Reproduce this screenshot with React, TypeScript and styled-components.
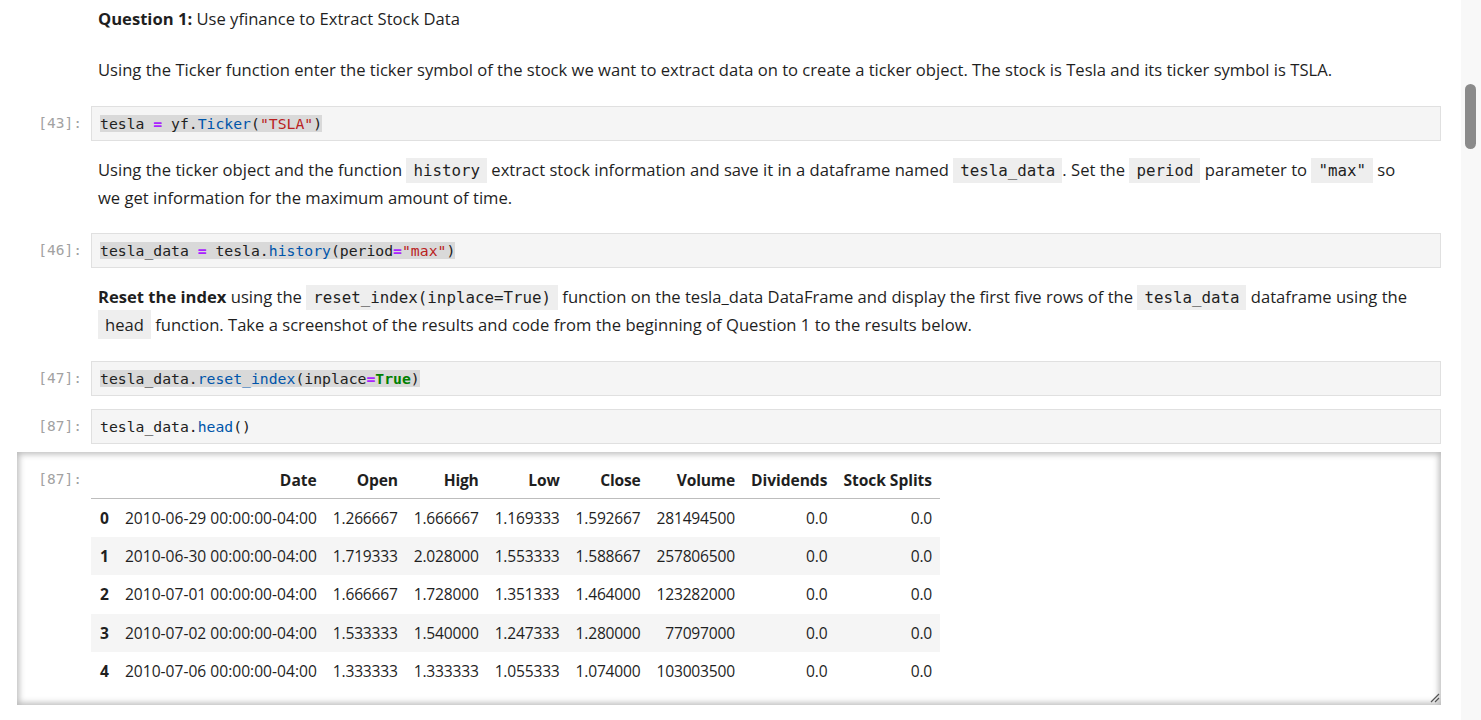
import React from 'react';
import styled, { createGlobalStyle } from 'styled-components';

const Global = createGlobalStyle`
  html, body { margin: 0; padding: 0; background: #fff; }
  body { font-family: "Open Sans", "Noto Sans", sans-serif; color: #1f1f1f; }
  * { box-sizing: border-box; }
`;

const Page = styled.div`
  display: flex;
  height: 720px;
  overflow: hidden;
  background: #fff;
`;

const Notebook = styled.main`
  flex: 1;
  min-width: 0;
  display: flex;
  flex-direction: column;
  padding: 5px 20px 0 0;
`;

const ScrollTrack = styled.div`
  width: 20px;
  flex: none;
  background: #f8f8f8;
  padding: 84px 0 0 4px;
`;

const ScrollThumb = styled.div`
  width: 11px;
  height: 65px;
  border-radius: 6px;
  background: #8b8b8b;
`;

const Cell = styled.section<{ $pt?: number; $pb?: number }>`
  display: grid;
  grid-template-columns: 91px 1fr;
  padding-top: ${(p) => p.$pt ?? 0}px;
  padding-bottom: ${(p) => p.$pb ?? 0}px;
`;

const Prompt = styled.div<{ $lh?: number }>`
  font-family: "DejaVu Sans Mono", monospace;
  font-size: 14.5px;
  line-height: ${(p) => p.$lh ?? 35}px;
  color: #a2a2a2;
  text-align: right;
  padding-right: 9px;
  white-space: pre;
`;

const Markdown = styled.div`
  padding: 0 26px 0 7px;
  font-size: 16.6px;
  line-height: 28px;
  color: #1f1f1f;
  p { margin: 0; }
  b { font-weight: 700; }
`;

const InlineCode = styled.code<{ $sans?: boolean }>`
  font-family: ${(p) => (p.$sans ? '"Open Sans", sans-serif' : '"DejaVu Sans Mono", monospace')};
  font-size: ${(p) => (p.$sans ? '16.6px' : '15.8px')};
  line-height: 1;
  background: #eeeeee;
  padding: 3px 7px;
  color: #1f1f1f;
`;

const Editor = styled.div`
  background: #f5f5f5;
  border: 1px solid #e0e0e0;
  padding: 8px;
  font-family: "DejaVu Sans Mono", monospace;
  font-size: 14.75px;
  line-height: 17px;
  color: #212121;
  white-space: pre;
`;

const Highlight = styled.span`
  background: #d9d9d9;
`;

const Tok = styled.span<{ $k: 'op' | 'fn' | 'str' | 'kw' }>`
  color: ${(p) =>
    p.$k === 'op' ? '#aa22ff' : p.$k === 'fn' ? '#0055aa' : p.$k === 'str' ? '#ba2121' : '#008000'};
  font-weight: ${(p) => (p.$k === 'op' || p.$k === 'kw' ? 700 : 400)};
`;

const OutputArea = styled.div`
  position: relative;
  margin: 8px 0 0 17px;
  height: 253px;
  padding-top: 9px;
  display: grid;
  grid-template-columns: 74px 1fr;
  align-items: start;
  box-shadow: inset 0 0 6px 2px rgba(0, 0, 0, 0.28);
`;

const ResizeHandle = styled.svg`
  position: absolute;
  right: 1px;
  bottom: 2px;
`;

const Table = styled.table`
  justify-self: start;
  border-collapse: collapse;
  font-size: 15.6px;
  color: #1f1f1f;
  white-space: nowrap;
  th, td {
    text-align: right;
    padding: 0 8px;
    vertical-align: middle;
  }
  th:nth-child(n + 3), td + td {
    letter-spacing: -0.2px;
  }
  th:nth-child(n + 8) {
    letter-spacing: -0.05px;
  }
  thead th {
    font-weight: 700;
    height: 37.5px;
    border-bottom: 1px solid #bdbdbd;
  }
  tbody th {
    font-weight: 700;
    text-align: left;
    padding-left: 9px;
  }
  tbody tr { height: 38.4px; }
  tbody tr:nth-child(even) { background: #f5f5f5; }
`;

const rows = [
  ['2010-06-29 00:00:00-04:00', '1.266667', '1.666667', '1.169333', '1.592667', '281494500', '0.0', '0.0'],
  ['2010-06-30 00:00:00-04:00', '1.719333', '2.028000', '1.553333', '1.588667', '257806500', '0.0', '0.0'],
  ['2010-07-01 00:00:00-04:00', '1.666667', '1.728000', '1.351333', '1.464000', '123282000', '0.0', '0.0'],
  ['2010-07-02 00:00:00-04:00', '1.533333', '1.540000', '1.247333', '1.280000', '77097000', '0.0', '0.0'],
  ['2010-07-06 00:00:00-04:00', '1.333333', '1.333333', '1.055333', '1.074000', '103003500', '0.0', '0.0'],
];

const headers = ['', 'Date', 'Open', 'High', 'Low', 'Close', 'Volume', 'Dividends', 'Stock Splits'];

export default function App() {
  return (
    <>
      <Global />
      <Page>
        <Notebook>
          <Cell>
            <div />
            <Markdown>
              <p>
                <b>Question 1:</b> Use yfinance to Extract Stock Data
              </p>
            </Markdown>
          </Cell>
          <Cell $pt={23} $pb={22}>
            <div />
            <Markdown>
              <p>
                Using the Ticker function enter the ticker symbol of the stock we want to extract data on to create a
                ticker object. The stock is Tesla and its ticker symbol is TSLA.
              </p>
            </Markdown>
          </Cell>
          <Cell>
            <Prompt>[43]:</Prompt>
            <Editor>
              <Highlight>
                tesla <Tok $k="op">=</Tok> yf.<Tok $k="fn">Ticker</Tok>(<Tok $k="str">"TSLA"</Tok>)
              </Highlight>
            </Editor>
          </Cell>
          <Cell $pt={15} $pb={21}>
            <div />
            <Markdown>
              <p>
                Using the ticker object and the function <InlineCode>history</InlineCode> extract stock information and
                save it in a dataframe named <InlineCode>tesla_data</InlineCode>. Set the <InlineCode>period</InlineCode>{' '}
                parameter to <InlineCode>"max"</InlineCode> so we get information for the maximum amount of time.
              </p>
            </Markdown>
          </Cell>
          <Cell>
            <Prompt>[46]:</Prompt>
            <Editor>
              <Highlight>
                tesla_data <Tok $k="op">=</Tok> tesla.<Tok $k="fn">history</Tok>(period<Tok $k="op">=</Tok>
                <Tok $k="str">"max"</Tok>)
              </Highlight>
            </Editor>
          </Cell>
          <Cell $pt={15} $pb={22}>
            <div />
            <Markdown>
              <p>
                <b>Reset the index</b> using the <InlineCode>reset_index(inplace=True)</InlineCode> function on the
                tesla_data DataFrame and display the first five rows of the <InlineCode>tesla_data</InlineCode>{' '}
                dataframe using the <InlineCode $sans>head</InlineCode> function. Take a screenshot of the results and
                code from the beginning of Question 1 to the results below.
              </p>
            </Markdown>
          </Cell>
          <Cell $pb={13}>
            <Prompt>[47]:</Prompt>
            <Editor>
              <Highlight>
                tesla_data.<Tok $k="fn">reset_index</Tok>(inplace<Tok $k="op">=</Tok>
                <Tok $k="kw">True</Tok>)
              </Highlight>
            </Editor>
          </Cell>
          <Cell>
            <Prompt>[87]:</Prompt>
            <Editor>
              tesla_data.<Tok $k="fn">head</Tok>()
            </Editor>
          </Cell>
          <OutputArea>
            <Prompt $lh={36}>[87]:</Prompt>
            <Table>
              <thead>
                <tr>
                  {headers.map((h, i) => (
                    <th key={i}>{h}</th>
                  ))}
                </tr>
              </thead>
              <tbody>
                {rows.map((r, i) => (
                  <tr key={i}>
                    <th>{i}</th>
                    {r.map((c, j) => (
                      <td key={j}>{c}</td>
                    ))}
                  </tr>
                ))}
              </tbody>
            </Table>
            <ResizeHandle width="10" height="10" viewBox="0 0 10 10">
              <path d="M1 9 L9 1 M5 9 L9 5" stroke="#555" strokeWidth="1.2" fill="none" />
            </ResizeHandle>
          </OutputArea>
        </Notebook>
        <ScrollTrack>
          <ScrollThumb />
        </ScrollTrack>
      </Page>
    </>
  );
}
